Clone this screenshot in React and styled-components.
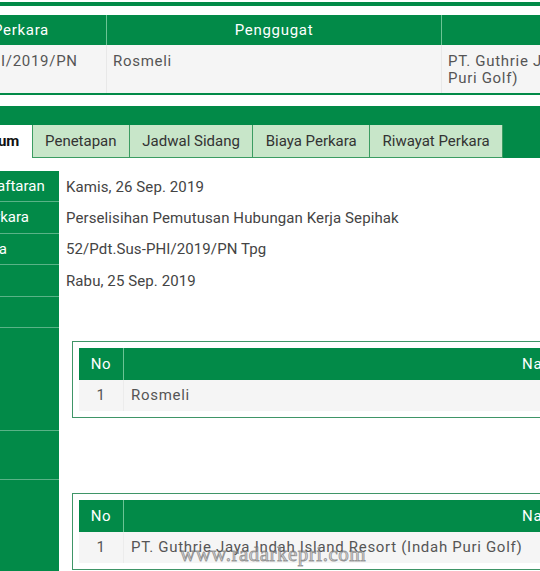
import React from 'react';
import styled, { createGlobalStyle } from 'styled-components';

const GREEN = '#028a48';
const LINE = 'rgba(255, 255, 255, 0.35)';

const GlobalStyle = createGlobalStyle`
  html, body {
    margin: 0;
    padding: 0;
    background: #fff;
  }
  body {
    font-family: Roboto, "Noto Sans", "Liberation Sans", sans-serif;
    overflow: hidden;
  }
`;

const Page = styled.div`
  position: relative;
  width: 540px;
  height: 571px;
  overflow: hidden;
  background: #fff;
`;

const TopRule = styled.div`
  height: 4px;
  margin-top: 2px;
  background: ${GREEN};
`;

const PartyTable = styled.div`
  display: grid;
  grid-template-columns: 224px 335px 340px;
  width: 899px;
  margin: 9px 0 0 -118px;
  border-bottom: 2px solid ${GREEN};
  letter-spacing: 0.7px;
  font-size: 15px;
`;

const PartyHead = styled.div`
  background: ${GREEN};
  color: #fff;
  height: 30px;
  line-height: 30px;
  text-align: center;
  border-left: ${(p) => (p.$first ? 'none' : '1px solid #6cc495')};
`;

const PartyCell = styled.div`
  background: #f5f5f5;
  color: #555;
  line-height: 17px;
  padding: 8px 7px 6px ${(p) => (p.$first ? '11px' : '6px')};
  min-height: 34px;
  border-left: ${(p) => (p.$first ? 'none' : '1px solid #e8e8e8')};
`;

const TabBar = styled.div`
  display: flex;
  margin-top: 11px;
  padding: 19px 0 0 0;
  background: ${GREEN};
`;

const TabList = styled.div`
  display: flex;
  margin-left: -72px;
`;

const Tab = styled.div`
  height: 32px;
  line-height: 32px;
  padding: 0 12.4px;
  font-size: 15px;
  background: ${(p) => (p.$active ? '#fff' : '#c8e6c9')};
  color: ${(p) => (p.$active ? '#111' : '#333')};
  font-weight: ${(p) => (p.$active ? 700 : 400)};
  border: 1px solid #3c9c62;
  border-left-width: ${(p) => (p.$active ? '0' : '1px')};
  border-bottom-color: ${(p) => (p.$active ? '#fff' : '#3c9c62')};
  border-top: none;
  margin-left: ${(p) => (p.$active ? '0' : '-1px')};
  &:first-child { margin-left: 0; }
`;

const Details = styled.div`
  display: grid;
  grid-template-columns: 161px 1fr;
  margin: 13px 0 0 -102px;
`;

const Label = styled.div`
  background: ${GREEN};
  color: #fff;
  font-size: 15px;
  line-height: 20.4px;
  padding: 5px 8px;
  border-bottom: 1px solid ${LINE};
  display: flex;
  align-items: center;
  white-space: nowrap;
`;

const Value = styled.div`
  color: #444;
  font-size: 15px;
  line-height: 20.4px;
  letter-spacing: 0.1px;
  padding: ${(p) => (p.$box ? '13px 0 13px 13px' : '5px 7px')};
  min-height: ${(p) => p.$min || 0}px;
  display: flex;
  align-items: center;
  white-space: nowrap;
`;

const PartyBox = styled.div`
  border: 1px solid #3f9567;
  padding: 6px;
  width: 900px;
`;

const BoxTable = styled.div`
  display: grid;
  grid-template-columns: 44px 840px;
  font-size: 15px;
  letter-spacing: 0.7px;
`;

const BoxHead = styled.div`
  background: ${GREEN};
  color: #fff;
  height: 32px;
  line-height: 32px;
  text-align: center;
  border-left: ${(p) => (p.$first ? 'none' : '1px solid #6cc495')};
`;

const BoxCell = styled.div`
  background: #f5f5f5;
  color: #555;
  height: 31px;
  line-height: 31px;
  padding: ${(p) => (p.$center ? '0' : '0 7px')};
  text-align: ${(p) => (p.$center ? 'center' : 'left')};
  border-left: ${(p) => (p.$center ? 'none' : '1px solid #ececec')};
`;

const Watermark = styled.div`
  position: absolute;
  left: 180px;
  top: 542px;
  font-family: "Liberation Serif", "DejaVu Serif", serif;
  font-size: 21px;
  letter-spacing: 0.5px;
  color: rgba(200, 200, 200, 0.55);
  -webkit-text-stroke: 0.9px rgba(95, 95, 95, 0.6);
  pointer-events: none;
`;

const tabs = ['Data Umum', 'Penetapan', 'Jadwal Sidang', 'Biaya Perkara', 'Riwayat Perkara'];

const Parties = ({ name }) => (
  <PartyBox>
    <BoxTable>
      <BoxHead $first>No</BoxHead>
      <BoxHead>Nama</BoxHead>
      <BoxCell $center>1</BoxCell>
      <BoxCell>{name}</BoxCell>
    </BoxTable>
  </PartyBox>
);

const rows = [
  ['Tanggal Pendaftaran', 'Kamis, 26 Sep. 2019'],
  ['Klasifikasi Perkara', 'Perselisihan Pemutusan Hubungan Kerja Sepihak'],
  ['Nomor Perkara', '52/Pdt.Sus-PHI/2019/PN Tpg'],
  ['Tanggal Surat', 'Rabu, 25 Sep. 2019'],
  ['Petitum', ''],
];

export default function App() {
  return (
    <Page>
      <GlobalStyle />
      <TopRule />
      <PartyTable>
        <PartyHead $first>Nomor Perkara</PartyHead>
        <PartyHead>Penggugat</PartyHead>
        <PartyHead>Tergugat</PartyHead>
        <PartyCell $first>52/Pdt.Sus-PHI/2019/PN Tpg</PartyCell>
        <PartyCell>Rosmeli</PartyCell>
        <PartyCell>PT. Guthrie Jaya Indah Island Resort (Indah Puri Golf)</PartyCell>
      </PartyTable>

      <TabBar>
        <TabList>
          {tabs.map((t, i) => (
            <Tab key={t} $active={i === 0}>{t}</Tab>
          ))}
        </TabList>
      </TabBar>

      <Details>
        {rows.map(([label, value]) => (
          <React.Fragment key={label}>
            <Label>{label}</Label>
            <Value>{value}</Value>
          </React.Fragment>
        ))}
        <Label>Penggugat</Label>
        <Value $box><Parties name="Rosmeli" /></Value>
        <Label>Kuasa</Label>
        <Value $min={39}></Value>
        <Label>Tergugat</Label>
        <Value $box><Parties name="PT. Guthrie Jaya Indah Island Resort (Indah Puri Golf)" /></Value>
      </Details>

      <Watermark>www.radarkepri.com</Watermark>
    </Page>
  );
}
